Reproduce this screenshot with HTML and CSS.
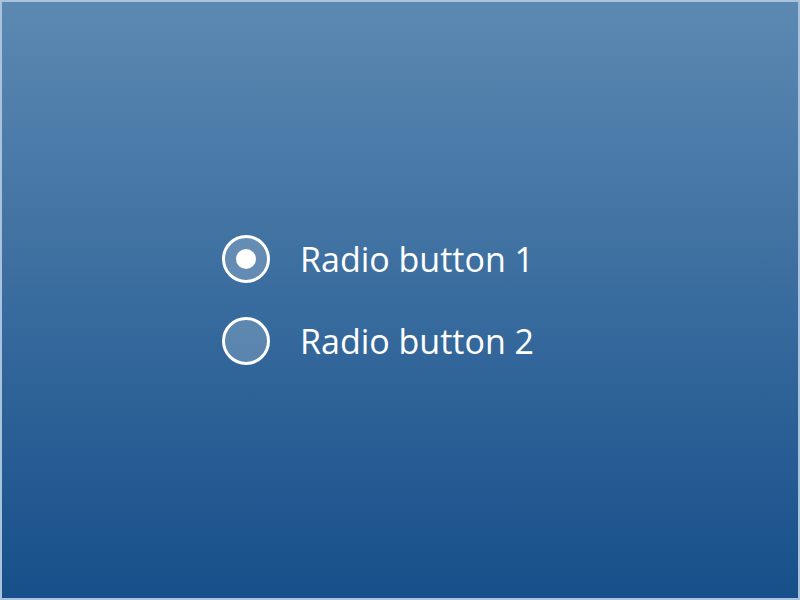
FILE: index.html
```html
<!DOCTYPE html>
<html lang="en">
<head>
    <meta charset="UTF-8">
    <meta name="viewport" content="width=device-width, initial-scale=1.0">
    <title>Radio buttons</title>
    <link rel="stylesheet" href="styles.css">
</head>
<body>

    <div class="screen">
        <div class="radio-group">
            <label class="radio">
                <span class="radio-mark checked"></span>
                <span class="radio-label">Radio button 1</span>
            </label>
            <label class="radio">
                <span class="radio-mark"></span>
                <span class="radio-label">Radio button 2</span>
            </label>
        </div>
    </div>

</body>
</html>
```

FILE: styles.css
```css
html, body {
    margin: 0;
    padding: 0;
}
body {
    font-family: "Open Sans", "Noto Sans", sans-serif;
}
.screen {
    width: 800px;
    height: 600px;
    box-sizing: border-box;
    border: 2px solid #a9c3dc;
    background: linear-gradient(to bottom, #5c89b2, #164f8a);
    display: flex;
    align-items: center;
    padding-left: 220px;
}
.radio-group {
    display: flex;
    flex-direction: column;
    gap: 34px;
}
.radio {
    display: flex;
    align-items: center;
    gap: 30px;
    color: #fff;
    cursor: pointer;
}
.radio-mark {
    width: 48px;
    height: 48px;
    box-sizing: border-box;
    border: 3px solid #fff;
    border-radius: 50%;
    background-color: rgba(255, 255, 255, 0.2);
    display: flex;
    align-items: center;
    justify-content: center;
}
.radio-mark.checked::after {
    content: "";
    width: 20px;
    height: 20px;
    border-radius: 50%;
    background-color: #fff;
}
.radio-label {
    font-size: 34px;
    line-height: 48px;
}
```
